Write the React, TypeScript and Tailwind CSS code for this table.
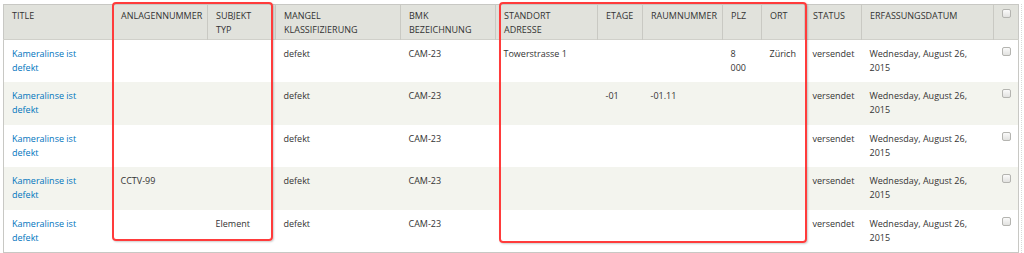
import React from "react";

type Row = {
  anlage?: string;
  subjekt?: string;
  adresse?: string;
  etage?: string;
  raum?: string;
  plz?: React.ReactNode;
  ort?: string;
};

const rows: Row[] = [
  {
    adresse: "Towerstrasse 1",
    plz: (
      <>
        8<br />000
      </>
    ),
    ort: "Zürich",
  },
  { etage: "-01", raum: "-01.11" },
  {},
  { anlage: "CCTV-99" },
  { subjekt: "Element" },
];

const cols = [
  { label: "TITLE", w: 109 },
  { label: "ANLAGENNUMMER", w: 95 },
  { label: "SUBJEKT TYP", w: 68 },
  { label: "MANGEL KLASSIFIZIERUNG", w: 125 },
  { label: "BMK BEZEICHNUNG", w: 95 },
  { label: "STANDORT ADRESSE", w: 102 },
  { label: "ETAGE", w: 45 },
  { label: "RAUMNUMMER", w: 80 },
  { label: "PLZ", w: 39 },
  { label: "ORT", w: 43 },
  { label: "STATUS", w: 57 },
  { label: "ERFASSUNGSDATUM", w: 132 },
];

const Checkbox = () => (
  <span className="block w-[9px] h-[9px] rounded-[2px] border border-[#b4b4b0] bg-gradient-to-b from-[#fafafa] to-[#e2e2e0]" />
);

const td = "align-top px-[8px] pt-[7px] leading-[14px]";

export default function App() {
  return (
    <div
      className="relative w-[1024px] h-[253px] bg-white text-[#333] text-[9px]"
      style={{ fontFamily: '"Open Sans", "DejaVu Sans", sans-serif' }}
    >
      <div className="flex pl-[3px] pt-[4px] h-full">
        <table className="table-fixed w-[1016px] border border-[#c8c8c4] bg-white">
          <colgroup>
            {cols.map((c) => (
              <col key={c.label} style={{ width: c.w }} />
            ))}
            <col style={{ width: 25 }} />
          </colgroup>
          <thead>
            <tr className="bg-[#e1e2dc] h-[35px] border-b border-[#d0d0ca]">
              {cols.map((c, i) => (
                <th
                  key={c.label}
                  className={
                    "align-top text-left font-normal px-[8px] pt-[4px] leading-[14px] " +
                    (i > 0 ? "border-l border-[#c9c9c3]" : "")
                  }
                >
                  {c.label}
                </th>
              ))}
              <th className="align-top pt-[4px] pl-[8px] border-l border-[#c9c9c3]">
                <Checkbox />
              </th>
            </tr>
          </thead>
          <tbody>
            {rows.map((r, i) => (
              <tr key={i} className={(i % 2 ? "bg-[#f3f4ee]" : "bg-white") + " h-[41.6px]"}>
                <td className={td}>
                  <a href="#" className="text-[#0074bd]">
                    Kameralinse ist defekt
                  </a>
                </td>
                <td className={td}>{r.anlage}</td>
                <td className={td}>{r.subjekt}</td>
                <td className={td}>defekt</td>
                <td className={td}>CAM-23</td>
                <td className={td}>{r.adresse}</td>
                <td className={td}>{r.etage}</td>
                <td className={td}>{r.raum}</td>
                <td className={td}>{r.plz}</td>
                <td className={td}>{r.ort}</td>
                <td className={td + " px-[6px]"}>versendet</td>
                <td className={td}>Wednesday, August 26, 2015</td>
                <td className="align-top pt-[7px] pl-[8px]">
                  <Checkbox />
                </td>
              </tr>
            ))}
          </tbody>
        </table>
        <div className="ml-[2px] border-l border-dotted border-[#d8d8d8]" />
      </div>

      {/* highlight boxes */}
      <div className="absolute left-[112px] top-[2px] w-[161px] h-[239px] border-2 border-[#ff3b3b] rounded-[4px] shadow-[1px_1px_2px_rgba(0,0,0,0.2)]" />
      <div className="absolute left-[499px] top-[2px] w-[308px] h-[241px] border-2 border-[#ff3b3b] rounded-[4px] shadow-[1px_1px_2px_rgba(0,0,0,0.2)]" />
    </div>
  );
}
